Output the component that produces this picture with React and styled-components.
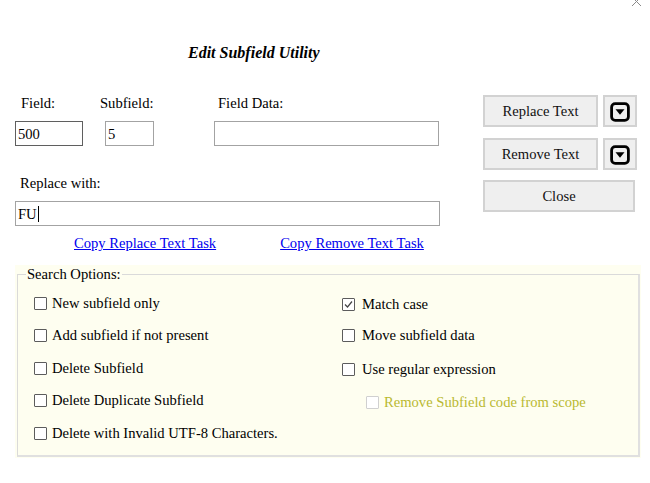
import React from "react";
import styled, { createGlobalStyle } from "styled-components";

const Global = createGlobalStyle`
  html, body { margin: 0; padding: 0; background: #ffffff; }
  body { font-family: "Liberation Serif", "Times New Roman", serif; color: #000; }
  * { box-sizing: border-box; }
`;

const FS = "14.6px";

const Page = styled.div`
  position: relative;
  width: 650px;
  height: 483px;
  padding: 0 9px 0 15px;
  overflow: hidden;
`;

const CloseX = styled.svg`
  position: absolute;
  top: -4px;
  right: 8px;
  width: 11px;
  height: 11px;
`;

const Title = styled.h1`
  margin: 44px 0 0 173px;
  height: 18px;
  font-size: 16px;
  line-height: 18px;
  font-weight: bold;
  font-style: italic;
`;

const Top = styled.div`
  display: flex;
  gap: 43px;
  margin-top: 33px;
`;

const LeftCol = styled.div`
  width: 425px;
  display: flex;
  flex-direction: column;
`;

const FieldRow = styled.div`
  display: flex;
`;

const FieldGroup = styled.div`
  display: flex;
  flex-direction: column;
  gap: 10px;
  margin-left: ${(p) => p.$gap || 0}px;
`;

const Label = styled.label`
  display: block;
  font-size: ${FS};
  line-height: 16px;
  height: 16px;
  margin-left: ${(p) => p.$shift || 0}px;
  white-space: nowrap;
`;

const TextInput = styled.div`
  width: ${(p) => p.$w}px;
  height: 25px;
  border: 1px solid ${(p) => (p.$dark ? "#5f5f5f" : "#a3a3a3")};
  background: #fff;
  font-size: ${FS};
  line-height: 22px;
  padding-left: 2px;
  display: flex;
  align-items: center;
`;

const Caret = styled.span`
  display: inline-block;
  width: 1px;
  height: 16px;
  background: #000;
  margin-left: 1px;
`;

const ReplaceBlock = styled.div`
  display: flex;
  flex-direction: column;
  gap: 10px;
  margin-top: 29px;
`;

const Links = styled.div`
  display: flex;
  gap: 64px;
  padding-left: 59px;
  margin-top: 9px;
`;

const Link = styled.a`
  font-size: ${FS};
  line-height: 16px;
  color: #0000ee;
  text-decoration: underline;
  cursor: pointer;
`;

const RightCol = styled.div`
  display: flex;
  flex-direction: column;
  gap: 11px;
`;

const BtnRow = styled.div`
  display: flex;
  gap: 5px;
  margin-top: ${(p) => p.$mt || 0}px;
`;

const Button = styled.button`
  width: ${(p) => p.$w}px;
  height: 32px;
  background: #efefef;
  border: 2px solid #d2d2d2;
  font-family: "Liberation Serif", "Times New Roman", serif;
  font-size: ${FS};
  color: #111;
  padding: 1px 0 0;
  display: flex;
  align-items: center;
  justify-content: center;
`;

const Panel = styled.div`
  margin-top: 14px;
  width: 626px;
  height: 193px;
  background: #fefef0;
  padding: 1px 1px 0 2px;
`;

const Fieldset = styled.fieldset`
  margin: 0;
  padding: 0;
  height: 191px;
  border: 1px solid #dadada;
  border-right: 2px solid #e0e0e0;
  border-bottom: 2px solid #e0e0e0;
  min-width: 0;
`;

const Legend = styled.legend`
  font-size: ${FS};
  line-height: 16px;
  padding: 0 1px;
  margin-left: 8px;
`;

const OptionGrid = styled.div`
  display: grid;
  grid-template-columns: 308px 1fr;
  grid-template-rows: repeat(5, 32.5px);
  grid-auto-flow: column;
  padding: 5px 0 0 16px;
`;

const Option = styled.div`
  display: flex;
  align-items: center;
  gap: 5px;
  padding-left: ${(p) => p.$indent || 0}px;
  font-size: ${FS};
  color: ${(p) => (p.$disabled ? "#b9b930" : "#000")};
  transform: translateY(${(p) => p.$dy || 0}px);
  white-space: nowrap;
`;

const Box = styled.span`
  width: 13px;
  height: 13px;
  border: 1px solid ${(p) => (p.$disabled ? "#d0d0d0" : "#5c5c5c")};
  background: #fff;
  border-radius: 1px;
  display: flex;
  align-items: center;
  justify-content: center;
  flex: none;
  margin-right: ${(p) => (p.$wide ? 2 : 0)}px;
`;

const DropIcon = () => (
  <svg width="20" height="20" viewBox="0 0 20 20">
    <rect x="1.6" y="1.6" width="16.8" height="16.8" rx="3.6" fill="none" stroke="#000" strokeWidth="2.8" />
    <polygon points="5.5,7.2 14.5,7.2 10,12.8" fill="#000" />
  </svg>
);

const Check = ({ checked, disabled, children, indent, dy, wide }) => (
  <Option $disabled={disabled} $indent={indent} $dy={dy}>
    <Box $disabled={disabled} $wide={wide}>
      {checked && (
        <svg width="11" height="11" viewBox="0 0 11 11">
          <polyline points="2,5.5 4.5,8 9,2.5" fill="none" stroke="#444" strokeWidth="1.2" />
        </svg>
      )}
    </Box>
    {children}
  </Option>
);

export default function App() {
  return (
    <>
      <Global />
      <Page>
        <CloseX viewBox="0 0 11 11">
          <path d="M1 1 L10 10 M10 1 L1 10" stroke="#8a8a8a" strokeWidth="1" />
        </CloseX>
        <Title>Edit Subfield Utility</Title>
        <Top>
          <LeftCol>
            <FieldRow>
              <FieldGroup>
                <Label $shift={6}>Field:</Label>
                <TextInput $w={68} $dark>500</TextInput>
              </FieldGroup>
              <FieldGroup $gap={22}>
                <Label $shift={-5}>Subfield:</Label>
                <TextInput $w={49}>5</TextInput>
              </FieldGroup>
              <FieldGroup $gap={60}>
                <Label $shift={4}>Field Data:</Label>
                <TextInput $w={225} />
              </FieldGroup>
            </FieldRow>
            <ReplaceBlock>
              <Label $shift={5}>Replace with:</Label>
              <TextInput $w={425}>
                FU<Caret />
              </TextInput>
            </ReplaceBlock>
            <Links>
              <Link>Copy Replace Text Task</Link>
              <Link>Copy Remove Text Task</Link>
            </Links>
          </LeftCol>
          <RightCol>
            <BtnRow>
              <Button $w={115}>Replace Text</Button>
              <Button $w={34}><DropIcon /></Button>
            </BtnRow>
            <BtnRow>
              <Button $w={115}>Remove Text</Button>
              <Button $w={34}><DropIcon /></Button>
            </BtnRow>
            <BtnRow $mt={-1}>
              <Button $w={152}>Close</Button>
            </BtnRow>
          </RightCol>
        </Top>
        <Panel>
          <Fieldset>
            <Legend>Search Options:</Legend>
            <OptionGrid>
              <Check>New subfield only</Check>
              <Check>Add subfield if not present</Check>
              <Check>Delete Subfield</Check>
              <Check>Delete Duplicate Subfield</Check>
              <Check>Delete with Invalid UTF-8 Characters.</Check>
              <Check checked dy={1} wide>Match case</Check>
              <Check wide>Move subfield data</Check>
              <Check dy={1} wide>Use regular expression</Check>
              <Check disabled indent={24} dy={2}>Remove Subfield code from scope</Check>
            </OptionGrid>
          </Fieldset>
        </Panel>
      </Page>
    </>
  );
}
